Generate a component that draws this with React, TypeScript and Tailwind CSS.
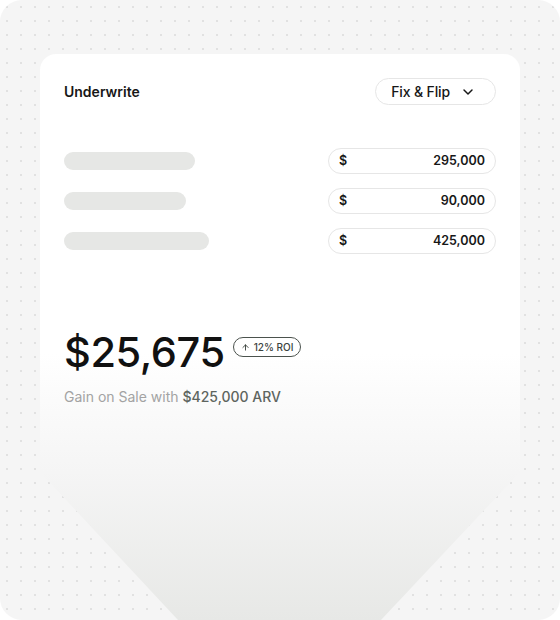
import { ChevronDown, ArrowUp } from 'lucide-react';

const rows = [
  { bar: 'w-[131px]', value: '295,000' },
  { bar: 'w-[122px]', value: '90,000' },
  { bar: 'w-[145px]', value: '425,000' },
];

export default function App() {
  return (
    <div className="h-[620px] w-[560px] overflow-hidden bg-white font-['Inter',sans-serif]">
      <div className="flex h-full w-full flex-col rounded-[22px] bg-[#f5f5f5] bg-[radial-gradient(circle,#e1e1e1_1px,transparent_1.3px)] bg-[size:14px_14px] px-10 pt-[54px]">
        <div className="flex h-[566px] flex-col rounded-t-2xl bg-[linear-gradient(180deg,#ffffff_0px,#ffffff_300px,#f5f5f5_418px,#e7e8e6_566px)] px-6 pt-6 [clip-path:polygon(0_0,100%_0,100%_418px,341px_100%,138px_100%,0_418px)]">
          <div className="flex items-center justify-between">
            <span className="text-[14px] font-semibold text-[#171717]">Underwrite</span>
            <button className="flex h-[27px] items-center gap-2.5 rounded-full border border-[#e6e6e6] bg-white pl-[15px] pr-[19px] text-[14px] font-medium tracking-[-0.01em] text-[#171717]">
              Fix &amp; Flip
              <ChevronDown className="h-4 w-4" strokeWidth={2.2} />
            </button>
          </div>

          <div className="mt-[43px] flex flex-col gap-[14px]">
            {rows.map((r) => (
              <div key={r.value} className="flex items-center justify-between">
                <div className={`h-[18px] rounded-full bg-[#e6e7e5] ${r.bar}`} />
                <div className="flex h-[26px] w-[168px] items-center justify-between rounded-full border border-[#e6e6e6] bg-white px-[10px] text-[12.5px] font-semibold text-[#171717]">
                  <span>$</span>
                  <span>{r.value}</span>
                </div>
              </div>
            ))}
          </div>

          <div className="mt-[73px] flex items-start gap-2">
            <span className="text-[41.5px] leading-[50px] font-medium tracking-[-0.01em] text-[#111111]">$25,675</span>
            <span className="mt-[10px] flex h-[20px] items-center gap-1 rounded-full border border-[#4b524d] px-[7px] text-[10px] font-medium text-[#3c433e]">
              <ArrowUp className="h-[9px] w-[9px]" strokeWidth={2.5} />
              12% ROI
            </span>
          </div>
          <p className="mt-[9px] text-[14px] text-[#a3a3a3]">
            Gain on Sale with <span className="font-medium text-[#5e655f]">$425,000 ARV</span>
          </p>
        </div>
      </div>
    </div>
  );
}
